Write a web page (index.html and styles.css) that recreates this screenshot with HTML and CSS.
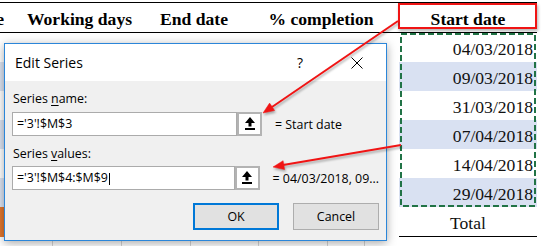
FILE: index.html
```html
<!DOCTYPE html>
<html>
<head>
<meta charset="utf-8">
<link rel="stylesheet" href="styles.css">
</head>
<body>
<div class="sheet">
  <div class="hdr">
    <div class="hc c0"><span>date</span></div>
    <div class="hc c1">Working days</div>
    <div class="hc c2">End date</div>
    <div class="hc c3">% completion</div>
    <div class="hc cm">Start date</div>
  </div>
  <div class="grid">
    <div class="strip"></div><div class="fill"></div>
    <div class="d first">04/03/2018
      <svg class="ants" width="138" height="174" viewBox="0 0 138 174"><rect x="2" y="1" width="134" height="172" fill="none" stroke="#217346" stroke-width="2" stroke-dasharray="6 3"/></svg>
    </div>
    <div class="strip alt"></div><div class="fill"></div><div class="d alt">09/03/2018</div>
    <div class="strip"></div><div class="fill"></div><div class="d">31/03/2018</div>
    <div class="strip alt"></div><div class="fill"></div><div class="d alt">07/04/2018</div>
    <div class="strip"></div><div class="fill"></div><div class="d">14/04/2018</div>
    <div class="strip alt"></div><div class="fill"></div><div class="d alt">29/04/2018</div>
    <div class="strip org"></div><div class="fill"></div><div class="d total">Total</div>
    <div class="strip"></div><div class="fill gl"><i class="g1"></i><i class="g2"></i><i class="g2"></i><i class="g3"></i><i class="g2"></i><i class="g4"></i></div><div class="d blank"></div>
  </div>

  <div class="dialog">
    <div class="title">
      <span class="tt">Edit Series</span>
      <span class="help">?</span>
      <svg class="close" width="12" height="12" viewBox="0 0 12 12"><path d="M0.5 0.5 L11.5 11.5 M11.5 0.5 L0.5 11.5" stroke="#000" stroke-width="1" fill="none"/></svg>
    </div>
    <div class="body">
      <div class="lbl">Series <u>n</u>ame:</div>
      <div class="row">
        <div class="inp">='3'!$M$3</div>
        <div class="pick"><svg width="10" height="13" viewBox="0 0 10 13"><polygon points="5,0 10,6 6.5,6 6.5,9.5 3.5,9.5 3.5,6 0,6" fill="#000"/><rect x="0" y="11" width="10" height="2" fill="#000"/></svg></div>
        <div class="res">= Start date</div>
      </div>
      <div class="lbl l2">Series <u>v</u>alues:</div>
      <div class="row r2">
        <div class="inp">='3'!$M$4:$M$9<span class="caret"></span></div>
        <div class="pick"><svg width="10" height="13" viewBox="0 0 10 13"><polygon points="5,0 10,6 6.5,6 6.5,9.5 3.5,9.5 3.5,6 0,6" fill="#000"/><rect x="0" y="11" width="10" height="2" fill="#000"/></svg></div>
        <div class="res">= 04/03/2018, 09...</div>
      </div>
      <div class="btns">
        <div class="btn ok">OK</div>
        <div class="btn">Cancel</div>
      </div>
    </div>
  </div>

  <svg class="arrows" width="542" height="246" viewBox="0 0 542 246">
    <g fill="#f01414" stroke="#f01414">
      <line x1="398" y1="21" x2="272" y2="107" stroke-width="2"/>
      <polygon points="263,113 269.6,103.1 274.6,110.5" stroke-width="0.5"/>
      <line x1="401" y1="145" x2="283" y2="165" stroke-width="2"/>
      <polygon points="273,167 283.1,160.7 284.6,169.6" stroke-width="0.5"/>
    </g>
  </svg>
</div>
</body>
</html>
```

FILE: styles.css
```css
html, body {
  margin: 0;
  padding: 0;
  background: #fff;
}

.sheet {
  position: relative;
  width: 542px;
  height: 246px;
  overflow: hidden;
  font-family: "Liberation Serif", "Times New Roman", serif;
  color: #000;
}

.hdr {
  display: flex;
  width: 537px;
  margin-top: 2px;
  height: 29px;
  box-sizing: content-box;
  border-top: 1px solid #000;
  border-bottom: 1px solid #000;
  font-weight: bold;
  font-size: 17.6px;
  line-height: 26px;
}

.hc {
  box-sizing: border-box;
  padding-top: 3px;
  text-align: center;
  white-space: nowrap;
}

.c0 {
  width: 4px;
  overflow: hidden;
  display: flex;
  justify-content: flex-end;
}

.c1 { width: 151px; }
.c2 { width: 92px; padding-right: 14px; }
.c3 { width: 152px; padding-right: 4px; }

.cm {
  width: 138px;
  position: relative;
}

.cm::after {
  content: "";
  position: absolute;
  left: -1px;
  top: 0;
  right: 0;
  height: 26px;
  box-sizing: border-box;
  border: 2px solid #f01414;
  box-shadow: 1px 2px 3px rgba(0, 0, 0, 0.3);
}

.grid {
  display: grid;
  grid-template-columns: 4px 395px 138px;
  grid-template-rows: repeat(6, 29px) 30px 10px;
}

.strip.alt { background: #dce3f1; }
.strip.org { background: #e2772e; }

.d {
  box-sizing: border-box;
  padding: 3px 4px 0 0;
  line-height: 26px;
  font-size: 17.6px;
  text-align: right;
  color: #111;
}

.d.alt { background: #d9e1f2; }

.d.first { position: relative; }

.ants {
  position: absolute;
  left: 0;
  top: 0;
  z-index: 2;
}

.d.total {
  text-align: center;
  padding-right: 0;
  border-bottom: 1px solid #000;
}

.gl {
  display: flex;
}

.gl i {
  display: block;
  box-sizing: border-box;
  border-right: 1px solid #d4d4d4;
  height: 10px;
}

.g1 { width: 49px; }
.g2 { width: 69px; }
.g3 { width: 68px; }
.g4 { width: 37px; }

/* dialog */
.dialog {
  position: absolute;
  left: 4px;
  top: 43px;
  width: 383px;
  height: 198px;
  box-sizing: border-box;
  border: 1px solid #2b86d9;
  background: #f0f0f0;
  box-shadow: 0 2px 9px rgba(0, 0, 0, 0.35);
  font-family: "Open Sans", "Noto Sans", sans-serif;
  color: #000;
  z-index: 3;
}

.title {
  height: 37px;
  background: #fff;
  display: flex;
  align-items: center;
  padding-right: 23px;
}

.tt {
  flex: 1;
  padding-left: 10px;
  font-size: 14px;
  line-height: 37px;
}

.help {
  font-size: 14px;
  margin-right: 48px;
}

.close {
  display: block;
}

.body {
  padding: 9px 7px 0 7px;
}

.lbl {
  font-size: 12.4px;
  line-height: 17px;
  padding-left: 1px;
}

.lbl u {
  text-underline-offset: 2px;
}

.l2 { margin-top: 9px; }

.row {
  display: flex;
  align-items: center;
  height: 24px;
  margin-top: 5px;
}

.row.r2 { margin-top: 4px; }

.inp {
  width: 225px;
  height: 24px;
  box-sizing: border-box;
  border: 1px solid #ababab;
  background: #fff;
  padding-left: 4px;
  font-size: 12.4px;
  line-height: 22px;
  white-space: nowrap;
}

.caret {
  display: inline-block;
  width: 1px;
  height: 12px;
  background: #000;
  vertical-align: -3px;
  margin-left: 1px;
}

.pick {
  width: 25px;
  height: 24px;
  box-sizing: border-box;
  border: 2px solid #b3b3b3;
  background: #fff;
  display: flex;
  align-items: center;
  justify-content: center;
  padding-bottom: 2px;
}

.pick svg { display: block; }

.res {
  margin-left: 13px;
  font-size: 12.4px;
  white-space: nowrap;
}

.btns {
  display: flex;
  justify-content: flex-end;
  gap: 14px;
  margin-top: 13px;
}

.btn {
  width: 86px;
  height: 27px;
  box-sizing: border-box;
  border: 1px solid #adadad;
  background: #e1e1e1;
  font-size: 12.4px;
  display: flex;
  align-items: center;
  justify-content: center;
}

.btn.ok {
  border: 2px solid #0078d7;
}

.arrows {
  position: absolute;
  left: 0;
  top: 0;
  z-index: 5;
  pointer-events: none;
  filter: drop-shadow(1px 2px 1px rgba(0, 0, 0, 0.3));
}
```
